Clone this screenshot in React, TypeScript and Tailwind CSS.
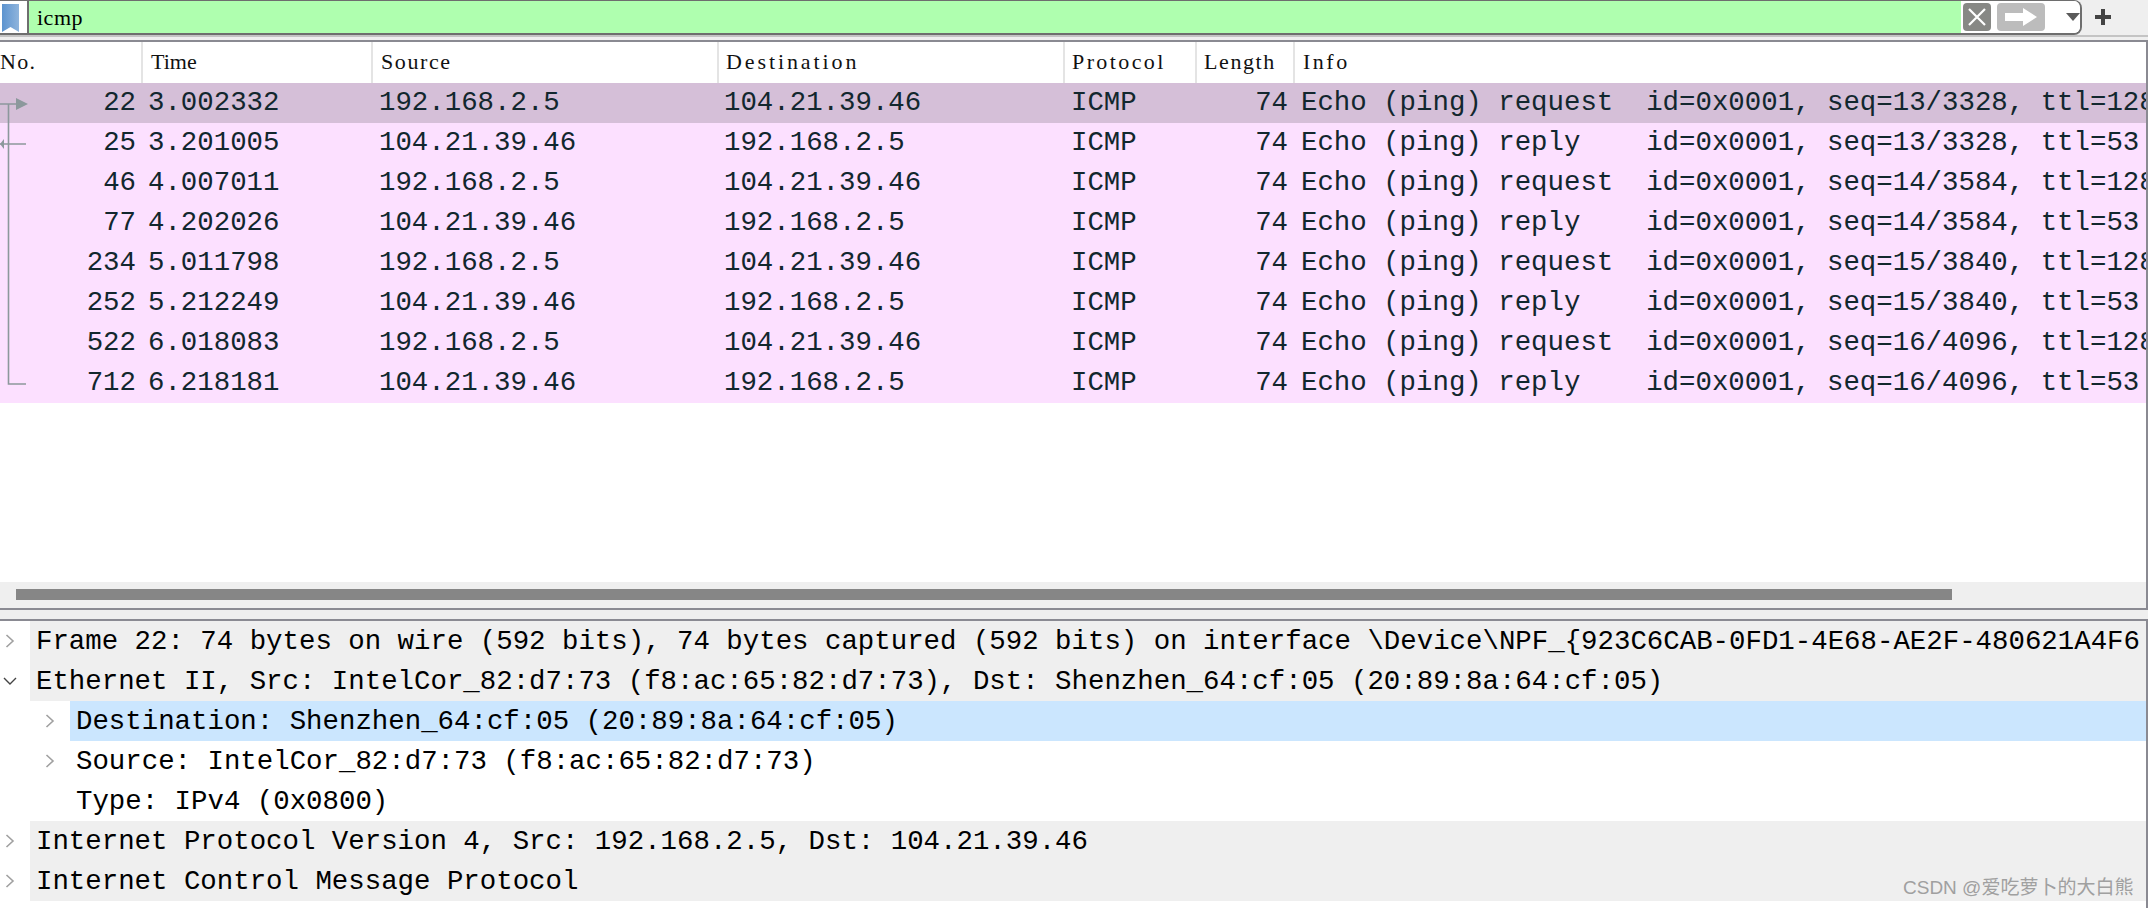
import React from 'react'

const mono = "font-['Liberation_Mono',monospace]";
const serif = "font-['Liberation_Serif',serif]";

const columns = [
  { label: 'No.', width: 'w-[143px]', head: 'pl-0 tracking-[1.3px]' },
  { label: 'Time', width: 'w-[230px]', head: 'pl-[8px] tracking-[0px]' },
  { label: 'Source', width: 'w-[346px]', head: 'pl-[8px] tracking-[1.6px]' },
  { label: 'Destination', width: 'w-[346px]', head: 'pl-[7px] tracking-[2.9px]' },
  { label: 'Protocol', width: 'w-[132px]', head: 'pl-[7px] tracking-[2.4px]' },
  { label: 'Length', width: 'w-[98px]', head: 'pl-[7px] tracking-[1.6px]' },
  { label: 'Info', width: 'flex-1', head: 'pl-[8px] tracking-[2.5px]' },
];

const req = 'Echo (ping) request  ';
const rep = 'Echo (ping) reply    ';
const A = '192.168.2.5';
const B = '104.21.39.46';

const packets = [
  ['22', '3.002332', A, B, req + 'id=0x0001, seq=13/3328, ttl=128 (reply in 25)'],
  ['25', '3.201005', B, A, rep + 'id=0x0001, seq=13/3328, ttl=53 (request in 22)'],
  ['46', '4.007011', A, B, req + 'id=0x0001, seq=14/3584, ttl=128 (reply in 77)'],
  ['77', '4.202026', B, A, rep + 'id=0x0001, seq=14/3584, ttl=53 (request in 46)'],
  ['234', '5.011798', A, B, req + 'id=0x0001, seq=15/3840, ttl=128 (reply in 252)'],
  ['252', '5.212249', B, A, rep + 'id=0x0001, seq=15/3840, ttl=53 (request in 234)'],
  ['522', '6.018083', A, B, req + 'id=0x0001, seq=16/4096, ttl=128 (reply in 712)'],
  ['712', '6.218181', B, A, rep + 'id=0x0001, seq=16/4096, ttl=53 (request in 522)'],
];

const details = [
  { text: 'Frame 22: 74 bytes on wire (592 bits), 74 bytes captured (592 bits) on interface \\Device\\NPF_{923C6CAB-0FD1-4E68-AE2F-480621A4F6', level: 0, arrow: 'right' },
  { text: 'Ethernet II, Src: IntelCor_82:d7:73 (f8:ac:65:82:d7:73), Dst: Shenzhen_64:cf:05 (20:89:8a:64:cf:05)', level: 0, arrow: 'down' },
  { text: 'Destination: Shenzhen_64:cf:05 (20:89:8a:64:cf:05)', level: 1, arrow: 'right', selected: true },
  { text: 'Source: IntelCor_82:d7:73 (f8:ac:65:82:d7:73)', level: 1, arrow: 'right' },
  { text: 'Type: IPv4 (0x0800)', level: 1, arrow: '' },
  { text: 'Internet Protocol Version 4, Src: 192.168.2.5, Dst: 104.21.39.46', level: 0, arrow: 'right' },
  { text: 'Internet Control Message Protocol', level: 0, arrow: 'right' },
];

function FilterBar() {
  return (
    <div className="flex h-[35px] bg-[#efefef]">
      <div className="flex flex-1 h-full border-t border-b-2 border-[#6e6e6e] rounded-br-lg border-r-2 rounded-tr-lg overflow-hidden bg-white">
        <div className="w-[27px] flex items-start pl-[2px] pt-[2px] bg-white">
          <svg width="17" height="29" viewBox="0 0 17 29">
            <defs>
              <linearGradient id="bm" x1="0" x2="1" y1="0" y2="0">
                <stop offset="0" stopColor="#5c93cf" />
                <stop offset="1" stopColor="#8fb4dc" />
              </linearGradient>
            </defs>
            <path d="M0 1 H17 V29 L8.5 24 L0 29 Z" fill="url(#bm)" />
          </svg>
        </div>
        <div className="w-[2px] bg-[#6e6e6e]" />
        <div className={`flex-1 bg-[#afffaf] pl-[8px] text-[22px] tracking-[0.5px] leading-[33px] text-black ${serif}`}>icmp</div>
        <div className="flex items-center w-[119px] pl-[2px] gap-[6px] bg-white">
          <svg width="28" height="28" viewBox="0 0 28 28">
            <rect width="28" height="28" rx="4" fill="#878885" />
            <path d="M6 6 L22 22 M22 6 L6 22" stroke="#fff" strokeWidth="2.2" />
          </svg>
          <svg width="48" height="28" viewBox="0 0 48 28">
            <rect width="48" height="28" rx="4" fill="#bcbcbc" />
            <path d="M8 10 H26 V5 L40 14 L26 23 V18 H8 Z" fill="#fff" />
          </svg>
          <svg className="ml-[15px]" width="14" height="8" viewBox="0 0 14 8">
            <path d="M0 0 H14 L7 8 Z" fill="#5a5a5a" />
          </svg>
        </div>
      </div>
      <div className="w-[66px] flex items-center pl-[13px] pb-[1px]">
        <svg width="16" height="16" viewBox="0 0 16 16">
          <path d="M8 0 V16 M0 8 H16" stroke="#444" strokeWidth="4" />
        </svg>
      </div>
    </div>
  );
}

function PacketList() {
  return (
    <div className="relative flex-1 border-t-2 border-[#8a8a92] border-r-2 bg-white flex flex-col overflow-hidden">
      <div className={`flex h-[41px] shrink-0 text-[22px] text-[#111] ${serif}`}>
        {columns.map((col) => (
          <div key={col.label} className={`${col.width} ${col.head} leading-[40px] border-r-2 border-[#e4e4e4] last:border-r-0`}>
            {col.label}
          </div>
        ))}
      </div>
      {packets.map((p, i) => (
        <div
          key={p[0]}
          className={`flex h-10 shrink-0 overflow-hidden text-[27.4px] leading-10 text-[#12272e] whitespace-pre ${mono} ${i === 0 ? 'bg-[#d5bfd8]' : 'bg-[#fce0ff]'}`}
        >
          <div className="w-[141px] pr-[5px] text-right">{p[0]}</div>
          <div className="w-[230px] pl-[7px]">{p[1]}</div>
          <div className="w-[346px] pl-[8px]">{p[2]}</div>
          <div className="w-[346px] pl-[7px]">{p[3]}</div>
          <div className="w-[132px] pl-[8px]">ICMP</div>
          <div className="w-[98px] pr-[5px] text-right">74</div>
          <div className="flex-1 pl-[8px] overflow-hidden">{p[4]}</div>
        </div>
      ))}
      {/* conversation lines over the first column */}
      <svg className="absolute left-0 top-[41px]" width="30" height="320" viewBox="0 0 30 320">
        <path d="M0 21 H17 M8.5 21 V301 H26 M0 61 H26" stroke="#8c989c" strokeWidth="1.6" fill="none" />
        <path d="M16 15 L28 21 L16 27 Z" fill="#8c989c" />
        <path d="M4 56 L0 61 L4 66 Z" fill="#8c989c" />
      </svg>
      <div className="mt-auto h-[26px] bg-[#efefef] pt-[7px] pl-[16px]">
        <div className="w-[1936px] h-[11px] bg-[#868686]" />
      </div>
    </div>
  );
}

function Chevron({ dir }: { dir: string }) {
  if (dir === 'down') {
    return (
      <svg width="14" height="14" viewBox="0 0 14 14">
        <path d="M1 4 L7 10 L13 4" stroke="#444" strokeWidth="1.4" fill="none" />
      </svg>
    );
  }
  return (
    <svg width="14" height="14" viewBox="0 0 14 14">
      <path d="M3.5 1 L10 7 L3.5 13" stroke="#a0a0a0" strokeWidth="1.6" fill="none" />
    </svg>
  );
}

function DetailTree() {
  return (
    <div className={`h-[289px] shrink-0 border-t-2 border-r-2 border-[#8a8a92] bg-white text-[27.4px] leading-[42px] text-black whitespace-pre ${mono}`}>
      {details.map((row) => (
        <div key={row.text} className={`flex h-10 overflow-hidden ${row.level === 1 ? 'pl-[40px]' : ''}`}>
          <div className="w-[30px] shrink-0 flex items-center pl-[3px]">
            {row.arrow && <Chevron dir={row.arrow} />}
          </div>
          <div
            className={`flex-1 overflow-hidden pl-[6px] ${row.selected ? 'bg-[#cbe6fe]' : row.level === 0 ? 'bg-[#efefef]' : ''}`}
          >
            {row.text}
          </div>
        </div>
      ))}
    </div>
  );
}

export default function App() {
  return (
    <div className="relative w-[2148px] h-[908px] overflow-hidden bg-white flex flex-col">
      <FilterBar />
      <div className="h-[5px] shrink-0 bg-[#efefef] border-t-2 border-[#c4c4c4]" />
      <PacketList />
      <div className="h-[11px] shrink-0 bg-[#efefef] border-t-2 border-[#8a8a92]" />
      <DetailTree />
      <div className="absolute left-[1903px] top-[875px] text-[19px] leading-[26px] text-[#a0a0a0] whitespace-nowrap font-['Liberation_Sans','Noto_Sans_CJK_SC',sans-serif]">
        CSDN @爱吃萝卜的大白熊
      </div>
    </div>
  );
}
